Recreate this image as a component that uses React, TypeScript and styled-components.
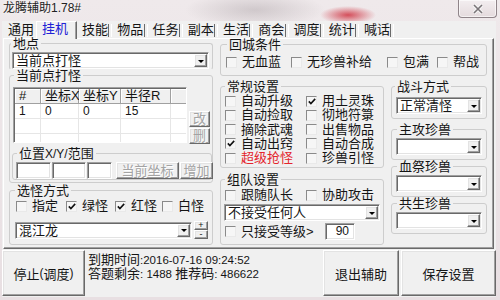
import React from 'react';
import styled, { createGlobalStyle } from 'styled-components';

const GlobalStyle = createGlobalStyle`
  html, body { margin: 0; padding: 0; background: #fff; }
  body {
    font-family: "Liberation Sans", "Noto Sans CJK SC", sans-serif;
    font-size: 13px;
    color: #151515;
  }
  * { box-sizing: border-box; }
`;

const Window = styled.div`
  width: 500px;
  height: 300px;
  display: flex;
  flex-direction: column;
  overflow: hidden;
  background:
    radial-gradient(ellipse 28px 9px at 348px 15px, rgba(205, 40, 55, 0.8), rgba(205, 40, 55, 0) 100%),
    radial-gradient(ellipse 70px 18px at 255px 10px, rgba(150, 140, 145, 0.35), rgba(150, 140, 145, 0) 100%),
    linear-gradient(180deg, #efe9eb 0%, #e8dfe2 100%);
`;

const TitleBar = styled.div`
  height: 21px;
  display: flex;
  align-items: flex-start;
  justify-content: space-between;
  padding-left: 3px;
`;

const Title = styled.span`
  font-size: 12px;
  line-height: 16px;
  color: #222;
  text-shadow: 0 0 4px rgba(255, 255, 255, 0.9);
`;

const CloseBtn = styled.span`
  width: 39px;
  height: 18px;
  margin-right: 3px;
  display: flex;
  align-items: center;
  justify-content: center;
  border: 1px solid #8f8489;
  border-top: none;
  border-radius: 0 0 4px 4px;
  background: linear-gradient(180deg, #f3eef0 0%, #e4dadd 100%);
  box-shadow: inset 0 0 0 1px rgba(255, 255, 255, 0.6);
`;

const Client = styled.div`
  flex: 1;
  margin: 0 4px 3px 2px;
  background: #f0f0f0;
  display: flex;
  flex-direction: column;
`;

const TabStrip = styled.div`
  height: 17px;
  display: flex;
  align-items: flex-end;
  padding-left: 1px;
  position: relative;
  z-index: 1;
`;

const Tab = styled.div<{ $active?: boolean; $sep?: boolean; $w: number }>`
  width: ${p => p.$w}px;
  height: 15px;
  padding-left: 5px;
  line-height: 14px;
  white-space: nowrap;
  position: relative;
  color: ${p => (p.$active ? '#2222d6' : '#151515')};
  ${p =>
    p.$active
      ? `
    background: #f0f0f0;
    border-top: 1px solid #fff;
    border-left: 1px solid #fff;
    border-right: 1px solid #6a6a6a;
    box-shadow: inset -1px 0 #a0a0a0;
    margin-bottom: -1px;
    height: 18px;
    line-height: 13px;
  `
      : ''}
  ${p =>
    p.$sep
      ? `
    &::after {
      content: '';
      position: absolute;
      right: 0;
      top: 1px;
      width: 2px;
      height: 13px;
      border-left: 1px solid #6a6a6a;
      border-right: 1px solid #fff;
    }
  `
      : ''}
`;

const TabPanel = styled.div`
  height: 211px;
  margin: 0 2px 0 1px;
  display: flex;
  padding-left: 5px;
  border: 1px solid;
  border-color: #fff #6a6a6a #6a6a6a #fff;
  box-shadow: inset -1px -1px #a0a0a0;
`;

const LeftCol = styled.div`
  width: 204px;
  display: flex;
  flex-direction: column;
  margin-top: -2px;
`;

const RightArea = styled.div`
  width: 267px;
  margin-left: 7px;
  margin-top: -1px;
  display: flex;
  flex-direction: column;
`;

const LowerArea = styled.div`
  display: flex;
  margin-top: 4px;
`;

const MiddleCol = styled.div`
  width: 164px;
  display: flex;
  flex-direction: column;
  gap: 5px;
`;

const RightCol = styled.div`
  width: 96px;
  margin-left: 7px;
  display: flex;
  flex-direction: column;
`;

const Group = styled.fieldset<{ $h: number; $open?: boolean; $mt?: number }>`
  margin: ${p => p.$mt ?? 0}px 0 0 0;
  padding: 0;
  min-width: 0;
  height: ${p => p.$h}px;
  border: 1px solid #cdcdcd;
  border-radius: 3px;
  ${p => (p.$open ? 'border-bottom-color: transparent;' : '')}
`;

const Legend = styled.legend<{ $indent: number }>`
  margin-left: ${p => p.$indent}px;
  padding: 0 2px;
  height: 13px;
  line-height: 13px;
  font-size: 13px;
  white-space: nowrap;
`;

const GroupBody = styled.div<{ $pad: string }>`
  padding: ${p => p.$pad};
`;

const Field = styled.div<{ $w: number; $h?: number }>`
  width: ${p => p.$w}px;
  height: ${p => p.$h ?? 17}px;
  flex: none;
  background: #fff;
  border: 1px solid;
  border-color: #a0a0a0 #fff #fff #a0a0a0;
  box-shadow: inset 1px 1px #696969, inset -1px -1px #e3e3e3;
`;

const ComboField = styled(Field)`
  display: flex;
  align-items: center;
  padding: 1px 1px 1px 3px;
  line-height: 15px;
`;

const ComboText = styled.span`
  flex: 1;
  white-space: nowrap;
  overflow: hidden;
`;

const Raised = styled.span`
  display: flex;
  align-items: center;
  justify-content: center;
  background: #f0f0f0;
  border: 1px solid;
  border-color: #fff #696969 #696969 #fff;
  box-shadow: inset -1px -1px #a0a0a0, inset 1px 1px #e3e3e3;
`;

const DropBtn = styled(Raised)`
  width: 13px;
  height: 13px;
  flex: none;
`;

const Arrow = styled.span`
  width: 0;
  height: 0;
  border-left: 3px solid transparent;
  border-right: 3px solid transparent;
  border-top: 3px solid #000;
  margin-top: 1px;
`;

const EditField = styled(Field)`
  text-align: right;
  padding-right: 5px;
  line-height: 15px;
  font-size: 12px;
`;

const CheckRow = styled.div<{ $cols: string; $rowH?: number }>`
  display: grid;
  grid-template-columns: ${p => p.$cols};
  grid-auto-rows: ${p => p.$rowH ?? 14}px;
  align-items: center;
`;

const CheckLabel = styled.label<{ $red?: boolean }>`
  display: flex;
  align-items: center;
  gap: 5px;
  height: 14px;
  line-height: 14px;
  white-space: nowrap;
  color: ${p => (p.$red ? '#e4252d' : 'inherit')};
`;

const Box = styled.span`
  width: 11px;
  height: 11px;
  flex: none;
  display: flex;
  align-items: center;
  justify-content: center;
  background: #f6f6f6;
  border: 1px solid;
  border-color: #8a8a8a #e9e9e9 #e9e9e9 #8a8a8a;
`;

const Num = styled.span<{ $size?: number }>`
  font-family: "Liberation Sans", sans-serif;
  font-size: ${p => p.$size ?? 11.5}px;
`;

const ListRow = styled.div`
  display: flex;
  gap: 2px;
  padding-left: 1px;
`;

const ListView = styled.div`
  width: 174px;
  height: 56px;
  background: #fff;
  border: 1px solid;
  border-color: #a0a0a0 #fff #fff #a0a0a0;
  box-shadow: inset 1px 1px #696969;
  padding: 1px 0 0 1px;
  overflow: hidden;
`;

const LvLine = styled.div`
  display: flex;
  height: 15px;
`;

const HeadCell = styled.div<{ $w: number }>`
  width: ${p => p.$w}px;
  flex: none;
  height: 15px;
  line-height: 13px;
  padding-left: 4px;
  background: #f0f0f0;
  border-right: 1px solid #a0a0a0;
  border-bottom: 1px solid #a0a0a0;
  box-shadow: inset 1px 1px #fff;
  white-space: nowrap;
`;

const Cell = styled.div<{ $w: number }>`
  width: ${p => p.$w}px;
  flex: none;
  height: 15px;
  line-height: 14px;
  padding-left: 4px;
  border-right: 1px solid #e6e6e6;
  border-bottom: 1px solid #e6e6e6;
  font-family: "Liberation Sans", sans-serif;
  font-size: 12px;
`;

const SideButtons = styled.div`
  display: flex;
  flex-direction: column;
  gap: 1px;
  padding-top: 24px;
`;

const PushButton = styled(Raised)<{ $w: number; $h: number; $disabled?: boolean }>`
  width: ${p => p.$w}px;
  height: ${p => p.$h}px;
  flex: none;
  font-size: 13px;
  line-height: 14px;
  white-space: nowrap;
  color: ${p => (p.$disabled ? '#a3a3a3' : '#151515')};
  text-shadow: ${p => (p.$disabled ? '1px 1px #fff' : 'none')};
`;

const InlineRow = styled.div<{ $gap?: number; $mt?: number; $ml?: number }>`
  display: flex;
  align-items: center;
  gap: ${p => p.$gap ?? 1}px;
  margin-top: ${p => p.$mt ?? 0}px;
  margin-left: ${p => p.$ml ?? 0}px;
`;

const Spin = styled.div`
  display: flex;
  flex-direction: column;
  margin-left: 2px;
`;

const SpinBtn = styled(Raised)`
  width: 14px;
  height: 9px;
  overflow: hidden;
  font-size: 9px;
  line-height: 7px;
  font-family: "Liberation Sans", sans-serif;
`;

const BottomBar = styled.div`
  flex: 1;
  display: flex;
  align-items: center;
  padding: 1px 0 1px 0;
`;

const BigButton = styled(Raised)<{ $w: number }>`
  width: ${p => p.$w}px;
  height: 46px;
  flex: none;
  font-size: 13px;
`;

const Info = styled.div`
  flex: 1;
  padding-left: 3px;
  line-height: 13px;
  align-self: flex-start;
  margin-top: 3px;
`;

const Gap = styled.span`
  width: 2px;
  flex: none;
`;

const CheckMark = () => (
  <svg width="8" height="7" viewBox="0 0 8 7">
    <path d="M0.8 3.4 L2.9 5.6 L7.2 0.9" stroke="#111" strokeWidth="1.6" fill="none" />
  </svg>
);

const Check = ({ label, checked, red }: { label: string; checked?: boolean; red?: boolean }) => (
  <CheckLabel $red={red}>
    <Box>{checked && <CheckMark />}</Box>
    {label}
  </CheckLabel>
);

const Combo = ({ w, text }: { w: number; text?: string }) => (
  <ComboField $w={w}>
    <ComboText>{text}</ComboText>
    <DropBtn>
      <Arrow />
    </DropBtn>
  </ComboField>
);

const tabs = ['通用', '挂机', '技能', '物品', '任务', '副本', '生活', '商会', '调度', '统计', '喊话'];
const activeTab = 1;

const petGroups = [
  { title: '主攻珍兽', mt: 4 },
  { title: '血祭珍兽', mt: 0 },
  { title: '共生珍兽', mt: 0 },
];

export default function App() {
  return (
    <>
      <GlobalStyle />
      <Window>
        <TitleBar>
          <Title>
            龙腾辅助<Num $size={12}>1.78#</Num>
          </Title>
          <CloseBtn>
            <svg width="12" height="10" viewBox="0 0 12 10">
              <path d="M2 1 L10 9 M10 1 L2 9" stroke="#f6f6f6" strokeWidth="3.4" />
              <path d="M2 1 L10 9 M10 1 L2 9" stroke="#7a7478" strokeWidth="1.6" />
            </svg>
          </CloseBtn>
        </TitleBar>
        <Client>
          <TabStrip>
            {tabs.map((t, i) => (
              <Tab
                key={t}
                $active={i === activeTab}
                $sep={i !== activeTab && i !== activeTab - 1}
                $w={i === 0 ? 33 : i === activeTab ? 41 : 35.25}
              >
                {t}
              </Tab>
            ))}
          </TabStrip>
          <TabPanel>
            <LeftCol>
              <Group $h={33} $open>
                <Legend $indent={1}>地点</Legend>
                <GroupBody $pad="2px 0 0 2px">
                  <Combo w={197} text="当前点打怪" />
                </GroupBody>
              </Group>
              <Group $h={114} $mt={-1}>
                <Legend $indent={4}>当前点打怪</Legend>
                <GroupBody $pad="5px 0 0 2px">
                  <ListRow>
                    <ListView>
                      <LvLine>
                        <HeadCell $w={26}>#</HeadCell>
                        <HeadCell $w={38}>坐标X</HeadCell>
                        <HeadCell $w={42}>坐标Y</HeadCell>
                        <HeadCell $w={50}>半径R</HeadCell>
                        <HeadCell $w={20} />
                      </LvLine>
                      <LvLine>
                        <Cell $w={26}>1</Cell>
                        <Cell $w={38}>0</Cell>
                        <Cell $w={42}>0</Cell>
                        <Cell $w={50}>15</Cell>
                        <Cell $w={20} />
                      </LvLine>
                      <LvLine>
                        <Cell $w={26} />
                        <Cell $w={38} />
                        <Cell $w={42} />
                        <Cell $w={50} />
                        <Cell $w={20} />
                      </LvLine>
                      <LvLine>
                        <Cell $w={26} />
                        <Cell $w={38} />
                        <Cell $w={42} />
                        <Cell $w={50} />
                        <Cell $w={20} />
                      </LvLine>
                    </ListView>
                    <SideButtons>
                      <PushButton $w={21} $h={16} $disabled>改</PushButton>
                      <PushButton $w={21} $h={16} $disabled>删</PushButton>
                    </SideButtons>
                  </ListRow>
                  <Group $h={33} $mt={3}>
                    <Legend $indent={4}>
                      位置<Num $size={12}>X/Y/</Num>范围
                    </Legend>
                    <GroupBody $pad="2px 0 0 3px">
                      <InlineRow>
                        <Field $w={35} />
                        <Field $w={34} />
                        <Field $w={25} />
                        <Gap />
                        <PushButton $w={63} $h={17} $disabled>当前坐标</PushButton>
                        <PushButton $w={33} $h={17} $disabled>增加</PushButton>
                      </InlineRow>
                    </GroupBody>
                  </Group>
                </GroupBody>
              </Group>
              <Group $h={61} $mt={1}>
                <Legend $indent={5}>选怪方式</Legend>
                <GroupBody $pad="2px 0 0 6px">
                  <CheckRow $cols="50px 49px 47px auto">
                    <Check label="指定" />
                    <Check label="绿怪" checked />
                    <Check label="红怪" checked />
                    <Check label="白怪" />
                  </CheckRow>
                  <InlineRow $mt={8} $ml={-1} $gap={0}>
                    <Combo w={177} text="混江龙" />
                    <Spin>
                      <SpinBtn>+</SpinBtn>
                      <SpinBtn>-</SpinBtn>
                    </Spin>
                  </InlineRow>
                </GroupBody>
              </Group>
            </LeftCol>
            <RightArea>
              <Group $h={38}>
                <Legend $indent={6}>回城条件</Legend>
                <GroupBody $pad="4px 0 0 5px">
                  <CheckRow $cols="65px 96px 50px auto">
                    <Check label="无血蓝" />
                    <Check label="无珍兽补给" />
                    <Check label="包满" />
                    <Check label="帮战" />
                  </CheckRow>
                </GroupBody>
              </Group>
              <LowerArea>
                <MiddleCol>
                  <Group $h={88}>
                    <Legend $indent={4}>常规设置</Legend>
                    <GroupBody $pad="1px 0 0 4px">
                      <CheckRow $cols="81px 81px" $rowH={14.25}>
                        <Check label="自动升级" />
                        <Check label="用土灵珠" checked />
                        <Check label="自动捡取" />
                        <Check label="彻地符箓" />
                        <Check label="摘除武魂" />
                        <Check label="出售物品" />
                        <Check label="自动出窍" checked />
                        <Check label="自动合成" />
                        <Check label="超级抢怪" red />
                        <Check label="珍兽引怪" />
                      </CheckRow>
                    </GroupBody>
                  </Group>
                  <Group $h={72}>
                    <Legend $indent={4}>组队设置</Legend>
                    <GroupBody $pad="2px 0 0 4px">
                      <CheckRow $cols="81px 81px">
                        <Check label="跟随队长" />
                        <Check label="协助攻击" />
                      </CheckRow>
                      <InlineRow $mt={2} $ml={-1}>
                        <Combo w={156} text="不接受任何人" />
                      </InlineRow>
                      <CheckRow $cols="100px 30px" $rowH={17} style={{ marginTop: 2 }}>
                        <Check label="只接受等级>" />
                        <EditField $w={30}>90</EditField>
                      </CheckRow>
                    </GroupBody>
                  </Group>
                </MiddleCol>
                <RightCol>
                  <Group $h={39}>
                    <Legend $indent={3}>战斗方式</Legend>
                    <GroupBody $pad="4px 0 0 4px">
                      <Combo w={86} text="正常清怪" />
                    </GroupBody>
                  </Group>
                  {petGroups.map(g => (
                    <Group key={g.title} $h={37} $mt={g.mt}>
                      <Legend $indent={5}>{g.title}</Legend>
                      <GroupBody $pad="2px 0 0 4px">
                        <Combo w={86} />
                      </GroupBody>
                    </Group>
                  ))}
                </RightCol>
              </LowerArea>
            </RightArea>
          </TabPanel>
          <BottomBar>
            <BigButton $w={83}>
              停止<Num $size={12}>(</Num>调度<Num $size={12}>)</Num>
            </BigButton>
            <Info>
              <div>
                到期时间<Num>:2016-07-16 09:24:52</Num>
              </div>
              <div>
                答题剩余<Num>: 1488 </Num>推荐码<Num>: 486622</Num>
              </div>
            </Info>
            <BigButton $w={76}>退出辅助</BigButton>
            <Gap />
            <BigButton $w={95}>保存设置</BigButton>
          </BottomBar>
        </Client>
      </Window>
    </>
  );
}
